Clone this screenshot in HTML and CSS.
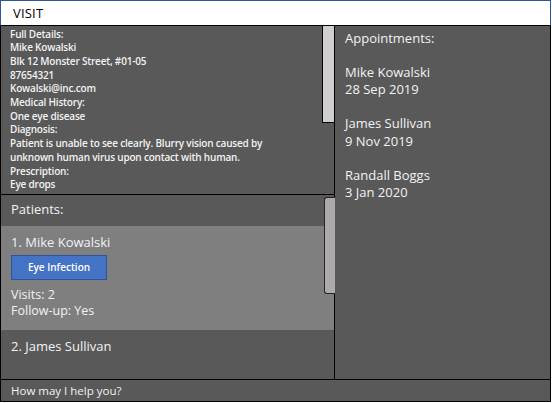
FILE: index.html
```html
<!DOCTYPE html>
<html>
<head>
<meta charset="utf-8">
<link rel="stylesheet" href="styles.css">
</head>
<body>
<div class="app">
  <header class="title">VISIT</header>
  <div class="main">
    <div class="left">
      <section class="details">
        <div class="details-text">
          <div>Full Details:</div>
          <div>Mike Kowalski</div>
          <div>Blk 12 Monster Street, #01-05</div>
          <div>87654321</div>
          <div>Kowalski@inc.com</div>
          <div>Medical History:</div>
          <div>One eye disease</div>
          <div>Diagnosis:</div>
          <div>Patient is unable to see clearly. Blurry vision caused by unknown human virus upon contact with human.</div>
          <div>Prescription:</div>
          <div>Eye drops</div>
        </div>
        <div class="thumb-track"><div class="thumb thumb-details"></div></div>
      </section>
      <section class="patients">
        <div class="patients-title">Patients:</div>
        <div class="card selected">
          <div class="card-name">1. Mike Kowalski</div>
          <div class="tag">Eye Infection</div>
          <div class="card-line">Visits: 2</div>
          <div class="card-line">Follow-up: Yes</div>
        </div>
        <div class="card">
          <div class="card-name">2. James Sullivan</div>
        </div>
        <div class="thumb thumb-patients"></div>
      </section>
    </div>
    <section class="appts">
      <div class="appt-line">Appointments:</div>
      <div class="appt-gap"></div>
      <div class="appt-line">Mike Kowalski</div>
      <div class="appt-line">28 Sep 2019</div>
      <div class="appt-gap"></div>
      <div class="appt-line">James Sullivan</div>
      <div class="appt-line">9 Nov 2019</div>
      <div class="appt-gap"></div>
      <div class="appt-line">Randall Boggs</div>
      <div class="appt-line">3 Jan 2020</div>
    </section>
  </div>
  <footer class="cmd">How may I help you?</footer>
</div>
</body>
</html>
```

FILE: styles.css
```css
* { box-sizing: border-box; margin: 0; padding: 0; }
html, body { background: #ffffff; }
body {
  font-family: "Open Sans", "Noto Sans", sans-serif;
}
.app {
  width: 551px;
  height: 402px;
  display: flex;
  flex-direction: column;
}
.title {
  height: 26px;
  border: 1px solid #2f5597;
  border-bottom: 1px solid #000;
  background: #fff;
  color: #000;
  font-size: 13px;
  letter-spacing: 0.2px;
  line-height: 24px;
  padding-left: 12px;
}
.main {
  height: 353px;
  display: flex;
  border-left: 1px solid #000;
  border-right: 1px solid #000;
  background: #595959;
  color: #f2f2f2;
}
.left {
  width: 334px;
  border-right: 1px solid #000;
  display: flex;
  flex-direction: column;
}
.details {
  height: 169px;
  border-bottom: 1px solid #000;
  display: flex;
}
.details-text {
  flex: 1;
  padding: 1.5px 40px 0 9px;
  font-size: 10px;
  font-weight: 600;
  letter-spacing: -0.2px;
  line-height: 13.7px;
}
.thumb-track { width: 12px; }
.thumb-details {
  width: 12px;
  height: 97px;
  background: #d0cece;
  border-left: 1px solid #000;
  border-bottom: 1px solid #000;
}
.patients {
  flex: 1;
  position: relative;
  font-size: 13px;
}
.patients-title {
  height: 31px;
  padding: 6px 0 0 10px;
  line-height: 17px;
}
.card { padding: 8px 10px 0 10px; }
.card.selected {
  background: #7f7f7f;
  height: 104px;
}
.card-name { line-height: 17px; }
.tag {
  margin: 4px 0 7px 0;
  width: 96px;
  height: 25px;
  background: #4472c4;
  border: 1px solid #2f5597;
  color: #fff;
  font-size: 10px;
  font-weight: 600;
  text-align: center;
  line-height: 23px;
}
.card-line {
  font-size: 12.5px;
  line-height: 16px;
}
.thumb-patients {
  position: absolute;
  right: -1px;
  top: 2px;
  width: 11px;
  height: 97px;
  background: #aeaaaa;
  border: 1px solid #262626;
  border-right: none;
  border-radius: 3px 0 0 3px;
}
.appts {
  flex: 1;
  padding: 4px 0 0 10px;
  font-size: 13px;
}
.appt-line { line-height: 17.1px; }
.appt-gap { height: 17.1px; }
.cmd {
  height: 23px;
  border: 1px solid #000;
  background: #595959;
  color: #f2f2f2;
  font-size: 11.5px;
  line-height: 21px;
  padding-left: 10px;
}
```
